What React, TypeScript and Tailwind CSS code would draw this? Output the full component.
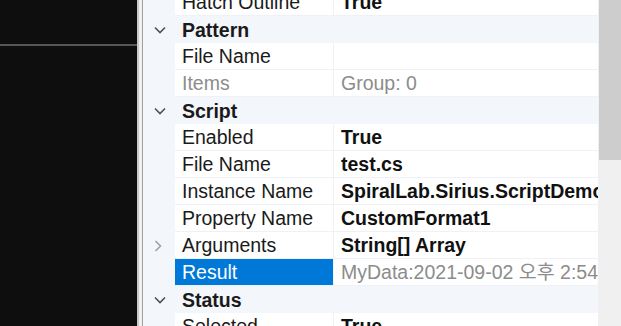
import React from 'react';

type Row =
  | { kind: 'cat'; label: string }
  | { kind: 'prop'; name: string; value?: string; muted?: boolean; expander?: boolean; selected?: boolean };

const rows: Row[] = [
  { kind: 'prop', name: 'Hatch Outline', value: 'True' },
  { kind: 'cat', label: 'Pattern' },
  { kind: 'prop', name: 'File Name', value: '' },
  { kind: 'prop', name: 'Items', value: 'Group: 0', muted: true },
  { kind: 'cat', label: 'Script' },
  { kind: 'prop', name: 'Enabled', value: 'True' },
  { kind: 'prop', name: 'File Name', value: 'test.cs' },
  { kind: 'prop', name: 'Instance Name', value: 'SpiralLab.Sirius.ScriptDemo' },
  { kind: 'prop', name: 'Property Name', value: 'CustomFormat1' },
  { kind: 'prop', name: 'Arguments', value: 'String[] Array', expander: true },
  { kind: 'prop', name: 'Result', value: 'MyData:2021-09-02 오후 2:54:12', selected: true },
  { kind: 'cat', label: 'Status' },
  { kind: 'prop', name: 'Selected', value: 'True' },
];

function ChevronDown() {
  return (
    <svg width="12" height="8" viewBox="0 0 12 8" fill="none">
      <path d="M1 1.5 L6 6.5 L11 1.5" stroke="#505050" strokeWidth="1.6" />
    </svg>
  );
}

function ChevronRight() {
  return (
    <svg width="8" height="12" viewBox="0 0 8 12" fill="none">
      <path d="M1.5 1 L6.5 6 L1.5 11" stroke="#a0a0a0" strokeWidth="1.6" />
    </svg>
  );
}

function GridRow({ row }: { row: Row }) {
  if (row.kind === 'cat') {
    return (
      <div className="flex h-[27px] bg-[#f3f6fb]">
        <div className="flex w-[32px] shrink-0 items-center justify-center pl-[1px]">
          <ChevronDown />
        </div>
        <div className="flex items-center pl-[7px] pt-[2px] font-bold text-[#1a1a1a]">{row.label}</div>
      </div>
    );
  }
  return (
    <div className="flex h-[27px]">
      <div className="flex w-[32px] shrink-0 items-center justify-center bg-[#f3f6fb] pr-[2px]">
        {row.expander && <ChevronRight />}
      </div>
      <div className="flex flex-1 border-b border-[#eef1f6] bg-white">
        <div
          className={
            row.selected
              ? 'flex w-[158px] shrink-0 items-center bg-[#0078d7] pl-[7px] pt-[2px] text-white'
              : row.muted
              ? 'flex w-[158px] shrink-0 items-center pl-[7px] pt-[2px] text-[#8c8c8c]'
              : 'flex w-[158px] shrink-0 items-center pl-[7px] pt-[2px] text-[#1a1a1a]'
          }
        >
          {row.name}
        </div>
        <div className="w-[1px] shrink-0 bg-[#f2f2f2]" />
        <div
          className={
            row.selected || row.muted
              ? 'flex flex-1 items-center overflow-hidden whitespace-nowrap pl-[7px] pt-[2px] text-[#8c8c8c]'
              : 'flex flex-1 items-center overflow-hidden whitespace-nowrap pl-[7px] pt-[2px] font-bold text-[#111]'
          }
        >
          {row.value}
        </div>
      </div>
    </div>
  );
}

export default function App() {
  return (
    <div
      className="flex h-[326px] w-[621px] overflow-hidden text-[19.5px]"
      style={{ fontFamily: '"Liberation Sans", Arial, "Noto Sans CJK KR", sans-serif' }}
    >
      <div className="w-[137px] shrink-0 bg-[#0e0e0e]">
        <div className="mt-[44px] h-[2px] bg-[#575757]" />
      </div>

      <div className="w-[2px] shrink-0 bg-[#c8c8c8]" />
      <div className="w-[3px] shrink-0 bg-[#f0f0f0]" />
      <div className="w-[1px] shrink-0 bg-[#a0a0a0]" />

      <div className="flex-1 overflow-hidden bg-white">
        <div className="-mt-[11px]">
          {rows.map((row, i) => (
            <GridRow key={i} row={row} />
          ))}
        </div>
      </div>

      <div className="flex w-[23px] shrink-0 flex-col bg-[#f0f0f0] pl-[1px]">
        <div className="h-[160px] bg-[#cdcdcd]" />
      </div>
    </div>
  );
}
